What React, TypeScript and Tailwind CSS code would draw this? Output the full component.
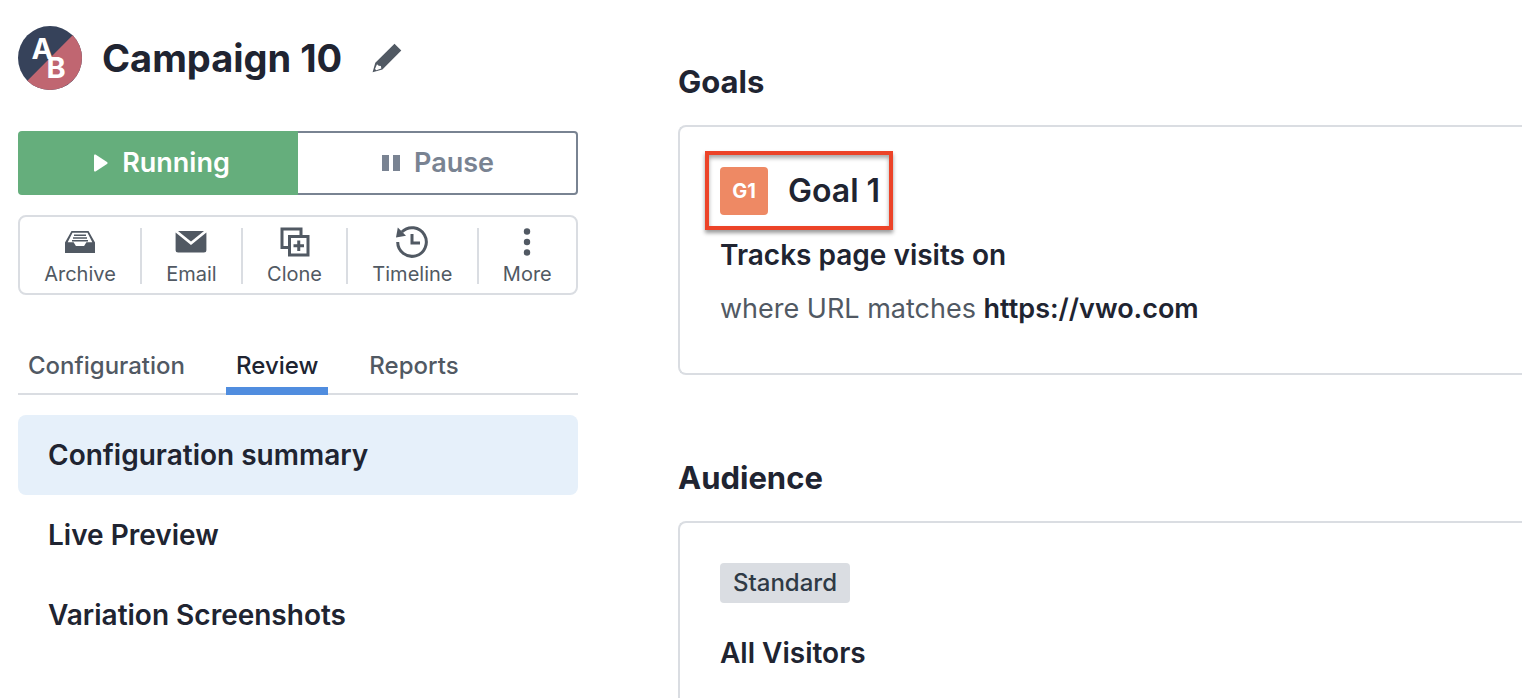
import type { ReactNode } from "react";

function LogoIcon() {
  return (
    <svg viewBox="0 0 64 64" className="size-16 shrink-0" role="img" aria-label="A/B test">
      <circle cx="32" cy="32" r="32" fill="#36425a" />
      <path d="M54.63 9.37A32 32 0 0 1 9.37 54.63Z" fill="#c06671" />
      <g fill="#fff" fontFamily="Inter, sans-serif" fontSize="29" fontWeight="700">
        <text x="13.5" y="33">A</text>
        <text x="28.5" y="51.5">B</text>
      </g>
    </svg>
  );
}

function PencilIcon() {
  return (
    <svg viewBox="0 0 30 30" className="size-[30px]" fill="#515963" aria-hidden="true">
      <path fillRule="evenodd" d="M22.5.8 29.3 7.6 10.4 26.4.6 29.3 3.3 19.8ZM5 21.2 3 26l1.3 1.2 5-1.8-.4-2.4-2.2-.3Z" />
    </svg>
  );
}

function ArchiveIcon() {
  return (
    <svg viewBox="0 0 30 22" className="h-[22px] w-[30px]" fill="#515963" aria-hidden="true">
      <path fillRule="evenodd" d="M6.5 0h17L30 11.500V22H0V11.500ZM7.500 1.700 2.700 11.300H8.600l2.300 3.800h8.200l2.300-3.800h5.900L22.500 1.700Z" />
      <path d="M9 3.500h12V5H9ZM8 6.300h14v1.500H8ZM7 9.100h16v1.500H7Z" />
    </svg>
  );
}

function EmailIcon() {
  return (
    <svg viewBox="0 0 32 22" className="h-[22px] w-8" fill="#515963" aria-hidden="true">
      <path d="M3 0h26L16 10.5Z" />
      <path d="M.6 1.6 16 14 31.4 1.6V19q0 2.5-2.5 2.5H3.1Q.6 21.5.6 19Z" />
    </svg>
  );
}

function CloneIcon() {
  return (
    <svg viewBox="0 0 30 30" className="size-[30px]" fill="none" stroke="#515963" aria-hidden="true">
      <path d="M8 20.5H2V2h19v6" strokeWidth="3" />
      <path d="M9.5 9.5H28V28H9.5Z" strokeWidth="3" />
      <path d="M18.75 13.5V24M13.5 18.75H24" strokeWidth="3" />
    </svg>
  );
}

function TimelineIcon() {
  return (
    <svg viewBox="0 0 32 32" className="size-8" fill="none" stroke="#515963" aria-hidden="true">
      <path d="M1.7 16A14.3 14.3 0 1 0 5.8 6" strokeWidth="3" />
      <path d="M1.8 1.6 0 11.5 10 9.8Z" fill="#515963" stroke="none" />
      <path d="M16 8v9h8" strokeWidth="3" />
    </svg>
  );
}

function MoreIcon() {
  return (
    <svg viewBox="0 0 8 28" className="h-7 w-2" fill="#515963" aria-hidden="true">
      <circle cx="4" cy="3.5" r="3.2" />
      <circle cx="4" cy="14" r="3.2" />
      <circle cx="4" cy="24.5" r="3.2" />
    </svg>
  );
}

const tools: { label: string; icon: ReactNode }[] = [
  { label: "Archive", icon: <ArchiveIcon /> },
  { label: "Email", icon: <EmailIcon /> },
  { label: "Clone", icon: <CloneIcon /> },
  { label: "Timeline", icon: <TimelineIcon /> },
  { label: "More", icon: <MoreIcon /> },
];

function Toolbar() {
  return (
    <div className="mt-5 flex rounded-lg border-2 border-[#dadde2] pt-[11px] pb-[9px]">
      {tools.map((tool) => (
        <button
          key={tool.label}
          type="button"
          className="flex h-14 flex-auto flex-col items-center border-r-2 border-[#dadde2] text-xl leading-5 text-[#515963] last:border-r-0"
        >
          <span className="flex h-7 shrink-0 items-center justify-center">{tool.icon}</span>
          <span className="mt-2 px-5">{tool.label}</span>
        </button>
      ))}
    </div>
  );
}

function Sidebar() {
  return (
    <aside className="w-[560px] shrink-0 pt-[26px]">
      <header className="flex h-16 items-center">
        <LogoIcon />
        <h1 className="ml-5 text-[38px] leading-[66px] font-bold">Campaign 10</h1>
        <button type="button" aria-label="Edit name" className="ml-[30px]">
          <PencilIcon />
        </button>
      </header>

      <div className="mt-[41px] flex h-16 text-[27px] font-semibold">
        <button
          type="button"
          className="flex w-1/2 items-center justify-center gap-3.5 rounded-l bg-[#65ae7c] pl-2 text-white"
        >
          <svg viewBox="0 0 14 18" className="h-[18px] w-3.5" fill="currentColor" aria-hidden="true">
            <path d="M0 1.5Q0 0 1.5.6L13 8Q14.2 9 13 10L1.5 17.4Q0 18 0 16.5Z" />
          </svg>
          Running
        </button>
        <button
          type="button"
          className="flex w-1/2 items-center justify-center gap-3.5 rounded-r border-y-2 border-r-2 border-[#798392] pl-0.5 text-[#798392]"
        >
          <svg viewBox="0 0 18 16" className="h-4 w-[18px]" fill="currentColor" aria-hidden="true">
            <path d="M0 0h7v16H0ZM11 0h7v16h-7Z" />
          </svg>
          Pause
        </button>
      </div>

      <Toolbar />

      <nav
        aria-label="Campaign sections"
        className="mt-[42px] flex gap-[31px] border-b-2 border-[#dadde2] text-2xl leading-[58px] font-medium text-[#515963]"
      >
        <a href="#configuration" className="-mb-0.5 h-[58px] px-2.5">Configuration</a>
        <a
          href="#review"
          aria-current="page"
          className="-mb-0.5 h-[58px] border-b-8 border-[#508ddf] px-2.5 text-[#202431]"
        >
          Review
        </a>
        <a href="#reports" className="-mb-0.5 h-[58px] px-2.5">Reports</a>
      </nav>

      <nav aria-label="Review pages" className="mt-5 flex flex-col text-[28px] leading-[80px] font-semibold">
        <a href="#summary" aria-current="page" className="rounded-lg bg-[#e6f0fa] px-[30px]">Configuration summary</a>
        <a href="#preview" className="rounded-lg px-[30px]">Live Preview</a>
        <a href="#screenshots" className="rounded-lg px-[30px]">Variation Screenshots</a>
      </nav>
    </aside>
  );
}

export default function App() {
  return (
    <div className="flex h-screen gap-[100px] overflow-hidden bg-white pl-[18px] font-['Inter',sans-serif] text-[#202431]">
      <Sidebar />
      <main className="min-w-0 flex-1 pt-[62px]">
        <section>
          <h2 className="text-[31px] leading-10 font-bold">Goals</h2>
          <div className="mt-[23px] h-[250px] rounded-l-lg border-y-2 border-l-2 border-[#dadde2] pt-6 pl-[25px]">
            <div className="flex h-[79px] w-fit items-center gap-5 border-4 border-[#ec4328] pr-[9px] pl-[11px] font-semibold shadow-[0_3px_4px_rgba(0,0,0,0.4),inset_0_3px_4px_rgba(0,0,0,0.35)]">
              <span className="flex size-12 items-center justify-center rounded bg-[#ee8964] text-xl font-bold text-white">G1</span>
              <h3 className="text-[32px]">Goal 1</h3>
            </div>
            <p className="mt-1 ml-[15px] text-[28px] leading-[42px] font-semibold">Tracks page visits on</p>
            <p className="mt-3 ml-[15px] text-[27px] leading-[42px] text-[#515963]">
              where URL matches <strong className="font-semibold text-[#202431]">https://vwo.com</strong>
            </p>
          </div>
        </section>

        <section className="mt-[83px]">
          <h2 className="text-[31px] leading-10 font-bold">Audience</h2>
          <div className="mt-[23px] h-[250px] rounded-l-lg border-y-2 border-l-2 border-[#dadde2] px-10 pt-10">
            <span className="inline-block rounded bg-[#dadde2] px-[13px] text-2xl leading-10 font-medium text-[#2f3a45]">Standard</span>
            <p className="mt-[29px] text-[28px] leading-[42px] font-semibold">All Visitors</p>
          </div>
        </section>
      </main>
    </div>
  );
}
